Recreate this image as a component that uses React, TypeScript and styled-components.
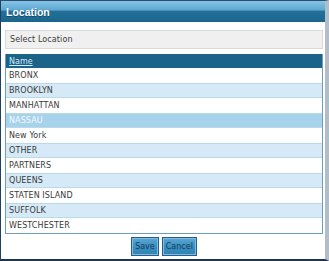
import React, { useState } from "react";
import styled, { createGlobalStyle } from "styled-components";

const GlobalStyle = createGlobalStyle`
    html, body {
        margin: 0;
        padding: 0;
        background: #ffffff;
    }
    * {
        box-sizing: border-box;
    }
`;

const Window = styled.div`
    width: 329px;
    height: 261px;
    display: flex;
    flex-direction: column;
    border-left: 1px solid #22405e;
    border-top: 1px solid #2b4d6e;
    border-bottom: 2px solid #1d3550;
    border-right: 4px solid #b3bdc7;
    font-family: "DejaVu Sans", Verdana, sans-serif;
`;

const TitleBar = styled.div`
    height: 21px;
    flex-shrink: 0;
    display: flex;
    align-items: center;
    padding-left: 5px;
    background: linear-gradient(#86c4e6 0%, #5fa9d3 42%, #236f98 50%, #1b668e 100%);
    color: #ffffff;
    font-family: "Liberation Sans", Arial, sans-serif;
    font-weight: 700;
    font-size: 10.5px;
    text-shadow: 0 1px 0 #154a68;
`;

const Body = styled.div`
    flex: 1;
    display: flex;
    flex-direction: column;
    background: #ffffff;
    padding: 8px 2px 0 4px;
`;

const SelectBox = styled.div`
    height: 19px;
    display: flex;
    align-items: center;
    padding-left: 4px;
    background: #f0f0f0;
    border: 1px solid #dadada;
    color: #3a3a3a;
    font-size: 8px;
    letter-spacing: 0.1px;
`;

const Table = styled.div`
    margin-top: 5px;
    border: 1px solid #6c9fbf;
    border-top: none;
`;

const HeaderRow = styled.div`
    height: 14px;
    display: flex;
    align-items: center;
    padding-left: 3px;
    background: #1b6389;
    a {
        color: #d4eaf7;
        font-size: 8px;
        text-decoration: underline;
        cursor: pointer;
    }
`;

const Row = styled.div<{ $alt: boolean; $selected: boolean }>`
    height: 15px;
    display: flex;
    align-items: center;
    padding-left: 3px;
    font-size: 8px;
    letter-spacing: 0.1px;
    color: ${(p) => (p.$selected ? "#f4fbff" : "#3a3a3a")};
    background: ${(p) => (p.$selected ? "#a6d2ea" : p.$alt ? "#d5eaf6" : "#ffffff")};
    border-top: 1px solid ${(p) => (p.$alt || p.$selected ? "#b9d9ec" : "transparent")};
    border-bottom: 1px solid ${(p) => (p.$alt || p.$selected ? "#b9d9ec" : "transparent")};
`;

const Footer = styled.div`
    display: flex;
    justify-content: center;
    gap: 3px;
    padding-top: 3px;
`;

const Button = styled.button`
    height: 19px;
    padding: 0 3px;
    border: 1px solid #2a5d84;
    box-shadow: inset 0 0 0 1px #7dbbe0;
    background: linear-gradient(#5aa7d6 0%, #3a8fc1 50%, #2f83b6 100%);
    color: #1b3a58;
    font-family: "DejaVu Sans", Verdana, sans-serif;
    font-size: 8px;
    cursor: pointer;
`;

const locations = [
    "BRONX",
    "BROOKLYN",
    "MANHATTAN",
    "NASSAU",
    "New York",
    "OTHER",
    "PARTNERS",
    "QUEENS",
    "STATEN ISLAND",
    "SUFFOLK",
    "WESTCHESTER",
];

function App() {
    const [selected, setSelected] = useState<string>("NASSAU");

    return (
        <>
            <GlobalStyle />
            <Window>
                <TitleBar>Location</TitleBar>
                <Body>
                    <SelectBox>Select Location</SelectBox>
                    <Table>
                        <HeaderRow>
                            <a>Name</a>
                        </HeaderRow>
                        {locations.map((name, i) => (
                            <Row
                                key={name}
                                $alt={i % 2 === 1}
                                $selected={name === selected}
                                onClick={() => setSelected(name)}
                            >
                                {name}
                            </Row>
                        ))}
                    </Table>
                    <Footer>
                        <Button>Save</Button>
                        <Button>Cancel</Button>
                    </Footer>
                </Body>
            </Window>
        </>
    );
}

export default App;
